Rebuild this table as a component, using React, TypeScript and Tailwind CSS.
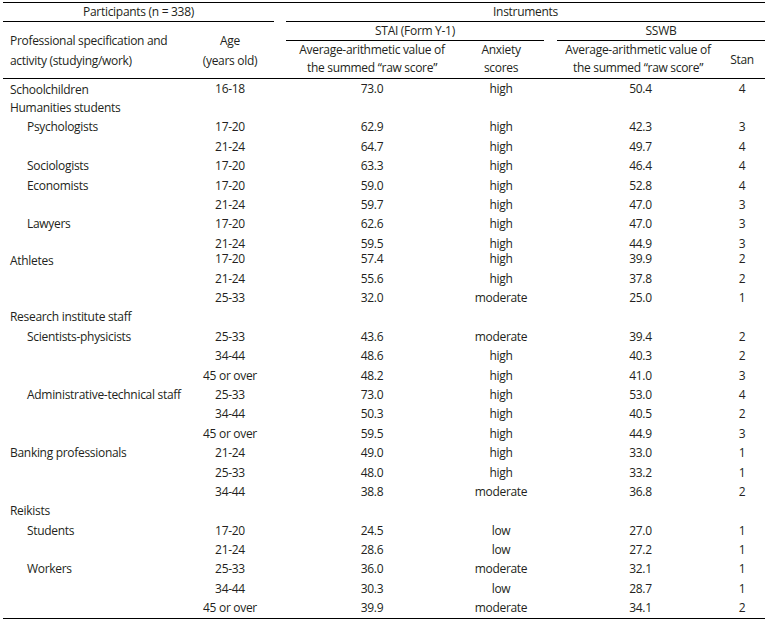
import React from "react";

type Row = {
  label?: string;
  indent?: boolean;
  age?: string;
  stai?: string;
  anx?: string;
  sswb?: string;
  stan?: string;
  tight?: boolean;
  low?: boolean;
};

const rows: Row[] = [
  { label: "Schoolchildren", age: "16-18", stai: "73.0", anx: "high", sswb: "50.4", stan: "4", low: true },
  { label: "Humanities students" },
  { label: "Psychologists", indent: true, age: "17-20", stai: "62.9", anx: "high", sswb: "42.3", stan: "3" },
  { age: "21-24", stai: "64.7", anx: "high", sswb: "49.7", stan: "4" },
  { label: "Sociologists", indent: true, age: "17-20", stai: "63.3", anx: "high", sswb: "46.4", stan: "4" },
  { label: "Economists", indent: true, age: "17-20", stai: "59.0", anx: "high", sswb: "52.8", stan: "4" },
  { age: "21-24", stai: "59.7", anx: "high", sswb: "47.0", stan: "3" },
  { label: "Lawyers", indent: true, age: "17-20", stai: "62.6", anx: "high", sswb: "47.0", stan: "3" },
  { age: "21-24", stai: "59.5", anx: "high", sswb: "44.9", stan: "3" },
  { label: "Athletes", age: "17-20", stai: "57.4", anx: "high", sswb: "39.9", stan: "2", tight: true, low: true },
  { age: "21-24", stai: "55.6", anx: "high", sswb: "37.8", stan: "2" },
  { age: "25-33", stai: "32.0", anx: "moderate", sswb: "25.0", stan: "1" },
  { label: "Research institute staff" },
  { label: "Scientists-physicists", indent: true, age: "25-33", stai: "43.6", anx: "moderate", sswb: "39.4", stan: "2" },
  { age: "34-44", stai: "48.6", anx: "high", sswb: "40.3", stan: "2" },
  { age: "45 or over", stai: "48.2", anx: "high", sswb: "41.0", stan: "3" },
  { label: "Administrative-technical staff", indent: true, age: "25-33", stai: "73.0", anx: "high", sswb: "53.0", stan: "4" },
  { age: "34-44", stai: "50.3", anx: "high", sswb: "40.5", stan: "2" },
  { age: "45 or over", stai: "59.5", anx: "high", sswb: "44.9", stan: "3" },
  { label: "Banking professionals", age: "21-24", stai: "49.0", anx: "high", sswb: "33.0", stan: "1" },
  { age: "25-33", stai: "48.0", anx: "high", sswb: "33.2", stan: "1" },
  { age: "34-44", stai: "38.8", anx: "moderate", sswb: "36.8", stan: "2" },
  { label: "Reikists" },
  { label: "Students", indent: true, age: "17-20", stai: "24.5", anx: "low", sswb: "27.0", stan: "1" },
  { age: "21-24", stai: "28.6", anx: "low", sswb: "27.2", stan: "1" },
  { label: "Workers", indent: true, age: "25-33", stai: "36.0", anx: "moderate", sswb: "32.1", stan: "1" },
  { age: "34-44", stai: "30.3", anx: "low", sswb: "28.7", stan: "1" },
  { age: "45 or over", stai: "39.9", anx: "moderate", sswb: "34.1", stan: "2" },
];

const cols = "grid grid-cols-[183px_88px_12px_172px_86px_13px_162px_46px]";

export default function App() {
  return (
    <div
      className="w-[770px] h-[624px] bg-white text-[#231f20] text-[12px] tracking-[-0.3px] overflow-hidden"
      style={{ fontFamily: '"Open Sans", "Noto Sans", sans-serif' }}
    >
      <div className="ml-[3px] w-[762px] mt-[2px]">
        {/* Header */}
        <div className={`${cols} grid-rows-[19px_19px_37px] border-t border-b border-black`}>
          <div className="col-span-2 border-b border-black flex items-center justify-center leading-none">
            Participants (n = 338)
          </div>
          <div />
          <div className="col-span-5 border-b border-black flex items-center justify-center leading-none">
            Instruments
          </div>

          <div className="row-span-2 flex items-center pl-[7px] leading-[20px] whitespace-nowrap">
            <div className="pt-[1px]">
              Professional specification and
              <br />
              activity (studying/work)
            </div>
          </div>
          <div className="row-span-2 flex items-center justify-center text-center leading-[20px]">
            <div className="pt-[1px]">
              Age
              <br />
              (years old)
            </div>
          </div>
          <div className="row-span-2" />
          <div className="col-span-2 border-b border-black flex items-center justify-center leading-none">
            STAI (Form Y-1)
          </div>
          <div />
          <div className="col-span-2 border-b border-black flex items-center justify-center leading-none">
            SSWB
          </div>

          <div className="flex items-center justify-center text-center leading-[18.5px] whitespace-nowrap">
            <div className="-mt-[1px]">
              Average-arithmetic value of
              <br />
              the summed “raw score”
            </div>
          </div>
          <div className="flex items-center justify-center text-center leading-[18.5px]">
            <div className="-mt-[1px]">
              Anxiety
              <br />
              scores
            </div>
          </div>
          <div />
          <div className="flex items-center justify-center text-center leading-[18.5px] whitespace-nowrap">
            <div className="-mt-[1px]">
              Average-arithmetic value of
              <br />
              the summed “raw score”
            </div>
          </div>
          <div className="flex items-center justify-center">Stan</div>
        </div>

        {/* Body */}
        <div className="border-b border-black">
          {rows.map((r, i) => (
            <div
              key={i}
              className={`${cols} h-[19.4px] items-center leading-none ${r.tight ? "-mt-[4px]" : ""}`}
            >
              <div
                className={`whitespace-nowrap ${r.indent ? "pl-[24px]" : "pl-[7px]"} ${r.low ? "pt-[3px]" : ""}`}
              >
                {r.label ?? ""}
              </div>
              <div className="text-center">{r.age ?? ""}</div>
              <div />
              <div className="text-center">{r.stai ?? ""}</div>
              <div className="text-center">{r.anx ?? ""}</div>
              <div />
              <div className="text-center pl-[5px]">{r.sswb ?? ""}</div>
              <div className="text-center">{r.stan ?? ""}</div>
            </div>
          ))}
        </div>
      </div>
    </div>
  );
}
